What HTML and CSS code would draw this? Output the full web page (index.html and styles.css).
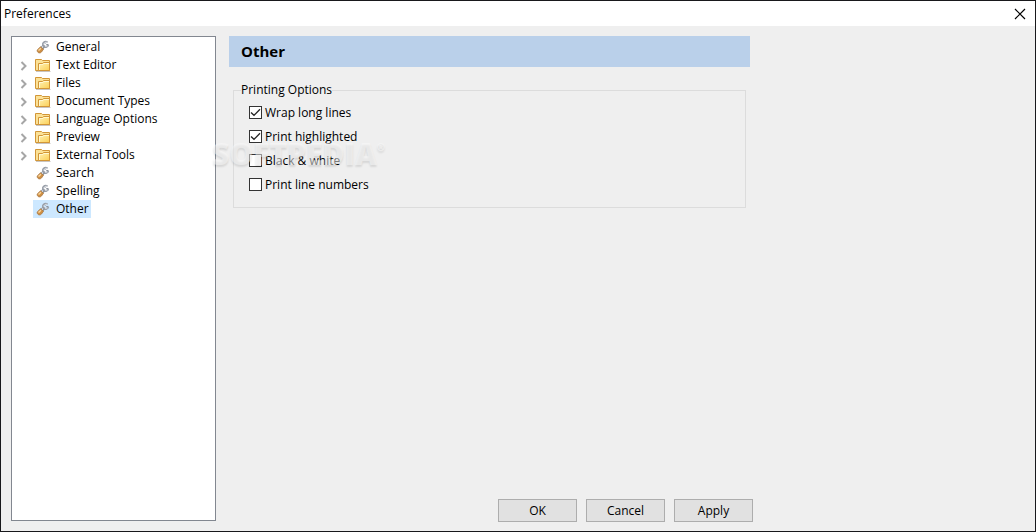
FILE: index.html
```html
<!DOCTYPE html>
<html lang="en">
<head>
<meta charset="utf-8">
<title>Preferences</title>
<link rel="stylesheet" href="styles.css">
</head>
<body>
<svg class="defs" aria-hidden="true">
  <defs>
    <linearGradient id="folder-fill" x1="0" y1="0" x2="1" y2="1">
      <stop offset="0" stop-color="#fff3b8"/>
      <stop offset="1" stop-color="#fbcf55"/>
    </linearGradient>
    <symbol id="folder" viewBox="0 0 16 16">
      <path d="M1 14.500H15.500" stroke="#c9c4c0" stroke-width="1"/>
      <path d="M.5 13.500V2.500H6.500L7.500 3.500H14.500V13.500Z" fill="#fbe196" stroke="#d29637"/>
      <path d="M3.500 13.500V6.500H7.500L8.500 5.500H14.500V13.500Z" fill="url(#folder-fill)" stroke="#d29637"/>
      <path d="M4.500 13V7.500H8L9 6.500H14" fill="none" stroke="#fff8d0"/>
    </symbol>
    <symbol id="wrench" viewBox="0 0 16 16">
      <path d="M6.500 9.500 9.500 6.500" stroke="#858b95" stroke-width="3.400"/>
      <path d="M6.500 9 9.500 6" stroke="#e6e9ee" stroke-width="1.200"/>
      <path d="M12.500 3.300C10.500 2.300 8.500 3 8 4.800 7.800 7 9.500 8.400 11.500 7.800 12.500 7.500 13 7 13.200 6" fill="none" stroke="#969ca6" stroke-width="2"/>
      <path d="M12 3.300C10.500 2.900 8.700 3.900 8.800 5.600M10 7.300 12.500 7" fill="none" stroke="#dfe2e7" stroke-width="1"/>
      <path d="M10.500 4.500 11.500 5.500 13.500 5.500" fill="none" stroke="#8b919d"/>
      <path d="M5.500 7.800 8.500 10.200 6.500 13C5 14.800 1.800 13.800 2.200 11Z" fill="#d08f42" stroke="#a87945" stroke-width=".8"/>
      <path d="M3.500 11.600 6 9.300" stroke="#f9d7a0" stroke-width="1.400"/>
    </symbol>
    <symbol id="chevron" viewBox="0 0 8 10">
      <path d="M1.500 1 5.500 5 1.500 9" fill="none" stroke="#a6a6a6" stroke-width="2"/>
    </symbol>
  </defs>
</svg>
<div class="window">
  <header class="titlebar">
    <span>Preferences</span>
    <button class="close" type="button" aria-label="Close">
      <svg width="12" height="12" viewBox="0 0 12 12"><path d="M1 1 11 11M11 1 1 11" stroke="#000" stroke-width="1.200"/></svg>
    </button>
  </header>
  <main class="body">
    <nav class="tree" aria-label="Categories">
      <ul>
        <li><span class="twist"></span><a href="#general"><svg class="icon"><use href="#wrench"/></svg>General</a></li>
        <li><button class="twist" type="button" aria-label="Expand Text Editor"><svg><use href="#chevron"/></svg></button><a href="#text"><svg class="icon"><use href="#folder"/></svg>Text Editor</a></li>
        <li><button class="twist" type="button" aria-label="Expand Files"><svg><use href="#chevron"/></svg></button><a href="#files"><svg class="icon"><use href="#folder"/></svg>Files</a></li>
        <li><button class="twist" type="button" aria-label="Expand Document Types"><svg><use href="#chevron"/></svg></button><a href="#types"><svg class="icon"><use href="#folder"/></svg>Document Types</a></li>
        <li><button class="twist" type="button" aria-label="Expand Language Options"><svg><use href="#chevron"/></svg></button><a href="#language"><svg class="icon"><use href="#folder"/></svg>Language Options</a></li>
        <li><button class="twist" type="button" aria-label="Expand Preview"><svg><use href="#chevron"/></svg></button><a href="#preview"><svg class="icon"><use href="#folder"/></svg>Preview</a></li>
        <li><button class="twist" type="button" aria-label="Expand External Tools"><svg><use href="#chevron"/></svg></button><a href="#tools"><svg class="icon"><use href="#folder"/></svg>External Tools</a></li>
        <li><span class="twist"></span><a href="#search"><svg class="icon"><use href="#wrench"/></svg>Search</a></li>
        <li><span class="twist"></span><a href="#spelling"><svg class="icon"><use href="#wrench"/></svg>Spelling</a></li>
        <li><span class="twist"></span><a class="selected" href="#other" aria-current="page"><svg class="icon"><use href="#wrench"/></svg>Other</a></li>
      </ul>
    </nav>
    <section class="page">
      <h1>Other</h1>
      <fieldset>
        <legend>Printing Options</legend>
        <label><input type="checkbox" checked>Wrap long lines</label>
        <label><input type="checkbox" checked>Print highlighted</label>
        <label><input type="checkbox">Black &amp; white</label>
        <label><input type="checkbox">Print line numbers</label>
      </fieldset>
      <div class="actions">
        <button type="button">OK</button>
        <button type="button">Cancel</button>
        <button type="button">Apply</button>
      </div>
    </section>
  </main>
  <div class="watermark">SOFTPEDIA<sup>®</sup></div>
</div>
</body>
</html>
```
FILE: styles.css
```css
* { box-sizing: border-box; }
body {
  margin: 0;
  font: 12px/18px "Open Sans", "Noto Sans", sans-serif;
  color: #000;
}
.defs { position: absolute; width: 0; height: 0; }
.window {
  position: relative;
  display: flex;
  flex-direction: column;
  min-height: 100vh;
  border: 1px solid #18181b;
  background: #efefef;
}
.titlebar {
  display: flex;
  align-items: center;
  justify-content: space-between;
  height: 25px;
  padding: 0 9px 0 3px;
  background: #fff;
}
.close {
  display: flex;
  padding: 0;
  border: 0;
  background: none;
}
.body {
  flex: 1;
  display: flex;
  gap: 13px;
  padding: 10px 10px 9px;
}
.tree {
  width: 205px;
  margin-bottom: 1px;
  padding: 1px 0 0 7px;
  border: 1px solid #828790;
  background: #fff;
}
.tree ul { margin: 0; padding: 0; list-style: none; }
.tree li { display: flex; height: 18px; }
.twist {
  display: flex;
  align-items: flex-end;
  width: 14px;
  padding: 0 0 3px 1px;
  border: 0;
  background: none;
}
.twist svg { width: 8px; height: 10px; }
.tree a {
  display: flex;
  align-items: center;
  gap: 5px;
  padding: 0 2px;
  color: inherit;
  text-decoration: none;
}
.tree a.selected { background: #cde8ff; }
.icon { width: 16px; height: 16px; }
.page {
  display: flex;
  flex-direction: column;
  flex: 1;
  max-width: 524px;
}
h1 {
  margin: 0 3px 16px 0;
  padding: 0 12px;
  background: #bad0ea;
  font-size: 15px;
  line-height: 31px;
}
fieldset {
  display: flex;
  flex-direction: column;
  gap: 6px;
  min-width: 0;
  margin: 0 7px 0 4px;
  padding: 7px 15px 13px;
  border: 1px solid #dcdcdc;
}
legend { margin-left: -8px; padding: 0; line-height: 14px; }
label { display: flex; align-items: center; gap: 3px; }
input {
  appearance: none;
  width: 13px;
  height: 13px;
  margin: 0 0 1px;
  border: 1px solid #333;
  background: #fff;
}
input:checked {
  background: #fff url("data:image/svg+xml,%3Csvg xmlns='http://www.w3.org/2000/svg' viewBox='0 0 11 11'%3E%3Cpath d='M1 5.500 4 8.300 10 2.300' fill='none' stroke='%23222' stroke-width='1.300'/%3E%3C/svg%3E");
}
.actions {
  display: flex;
  justify-content: flex-end;
  gap: 9px;
  margin-top: auto;
}
.actions button {
  width: 79px;
  height: 23px;
  padding: 0;
  border: 1px solid #adadad;
  background: #e1e1e1;
  color: inherit;
  font: inherit;
}
.watermark {
  position: absolute;
  top: 133px;
  left: 211px;
  color: rgba(250, 250, 250, .5);
  font-size: 30px;
  font-weight: 800;
  line-height: 40px;
  text-shadow: 0 2px 2px rgba(0, 0, 0, .1);
  pointer-events: none;
}
.watermark sup { font-size: 10px; line-height: 10px; vertical-align: 14px; }
```
